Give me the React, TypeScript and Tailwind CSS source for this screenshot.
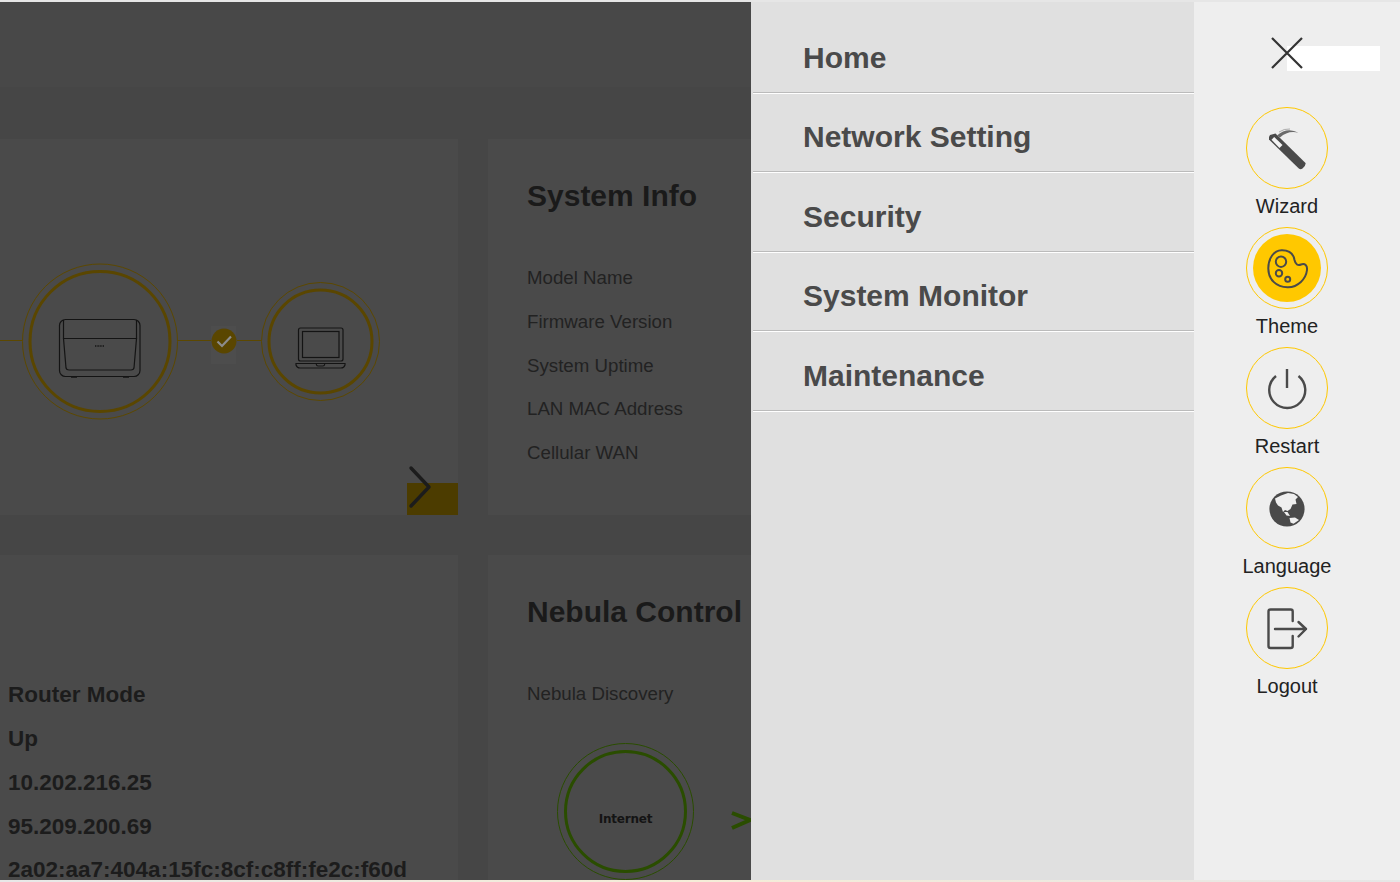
import React from 'react';

const font = "font-['Liberation_Sans',Arial,sans-serif]";

const menuItems = ['Home', 'Network Setting', 'Security', 'System Monitor', 'Maintenance'];

const WizardIcon = () => (
  <svg viewBox="0 0 82 82" className="h-full w-full" fill="none">
    <path d="M23 30 L24 28 L29.5 26.5 L59.5 56 Q60.2 58 56.5 61.5 Q54.5 63 52.8 61.5 L23 32.5 Z" fill="#4a4a4a" />
    <path d="M28.2 30 L36.5 38 L33.5 41 L25.5 32.8 Z" fill="#f4f4f4" />
    <path d="M31 28.5 Q41 19.5 52.6 25.7 Q42 23 34 30.5 Z" fill="#6a6a6a" />
    <path d="M33 25 Q38 21.5 44 22" stroke="#9a9a9a" strokeWidth="0.8" />
  </svg>
);

const ThemeIcon = () => (
  <svg viewBox="0 0 82 82" className="h-full w-full" fill="none">
    <circle cx="41" cy="41" r="34" fill="#ffc800" />
    <path
      d="M35.5 23.2 C43 23 47.5 27 48.5 33 C49.5 37.5 52 39 55 37.5 C59 36 61.5 38.5 61 43 C60 52 52 60 42 60.3 C30 60.5 22.3 52 22.3 41.5 C22.3 31 28 23.4 35.5 23.2 Z"
      stroke="#4a4a4a"
      strokeWidth="2"
    />
    <circle cx="35" cy="34.7" r="5.2" stroke="#4a4a4a" strokeWidth="2" />
    <circle cx="33" cy="46.3" r="3.2" stroke="#4a4a4a" strokeWidth="2" />
    <circle cx="41.7" cy="52.2" r="2.5" stroke="#4a4a4a" strokeWidth="2" />
  </svg>
);

const RestartIcon = () => (
  <svg viewBox="0 0 82 82" className="h-full w-full" fill="none" stroke="#4a4a4a" strokeWidth="2.4">
    <path d="M30 29 A18 18 0 1 0 52.5 29" />
    <path d="M41 22 V41" />
  </svg>
);

const LanguageIcon = () => (
  <svg viewBox="0 0 82 82" className="h-full w-full" fill="none">
    <circle cx="41" cy="42" r="17.6" fill="#4a4a4a" />
    <path
      d="M29 31.5 L35 28.5 L42 26 L48 27 L52 30 L49.5 32.5 L50.5 37 L46.5 37.5 L44.5 42 L41.5 44 L39 43 L37 45 L35.5 40.5 L32 38.5 L30 35.5 Z"
      fill="#efefef"
    />
    <path d="M38 45 L41.5 45 L44 49 L40.5 48.5 Z" fill="#efefef" />
    <path d="M43.5 51 L49 50.5 L53 53 L47.5 56.8 L44.5 55.5 Z" fill="#efefef" />
  </svg>
);

const LogoutIcon = () => (
  <svg
    viewBox="0 0 82 82"
    className="h-full w-full"
    fill="none"
    stroke="#4a4a4a"
    strokeWidth="2.4"
    strokeLinecap="round"
    strokeLinejoin="round"
  >
    <path d="M46.7 34 V24.5 Q46.7 22.5 44.7 22.5 H24.5 Q22.5 22.5 22.5 24.5 V59 Q22.5 61 24.5 61 H44.7 Q46.7 61 46.7 59 V49" />
    <path d="M29 42 H60 M52.5 35 L60 42 L52.5 49.5" />
  </svg>
);

const railItems = [
  { label: 'Wizard', icon: <WizardIcon /> },
  { label: 'Theme', icon: <ThemeIcon /> },
  { label: 'Restart', icon: <RestartIcon /> },
  { label: 'Language', icon: <LanguageIcon /> },
  { label: 'Logout', icon: <LogoutIcon /> },
];

const ConnectionDiagram = () => (
  <svg width="458" height="170" viewBox="0 255 458 170" fill="none" className="block">
    <path d="M0 340.5 H22 M178 340.5 H211 M237 340.5 H261" stroke="#5c4800" strokeWidth="1" />
    <circle cx="100" cy="341.5" r="77.5" stroke="#5c4800" strokeWidth="1" />
    <circle cx="100" cy="341.5" r="70" stroke="#5a4600" strokeWidth="3" />
    <rect x="211" y="326" width="25" height="38" fill="#4d4d4d" />
    <circle cx="224" cy="341" r="12.5" fill="#5a4600" />
    <path d="M217.5 341.5 L222 346 L231 336.5" stroke="#8c8c8c" strokeWidth="2.2" />
    <circle cx="320.5" cy="341.5" r="59" stroke="#5c4800" strokeWidth="1" />
    <circle cx="320.5" cy="341.5" r="51.5" stroke="#5a4600" strokeWidth="3" />
    {/* router */}
    <g stroke="#141414" strokeWidth="1.2">
      <rect x="59.5" y="319.5" width="80.5" height="57" rx="6" />
      <path d="M63.5 320 V338.5 H136.5 V320" />
      <path d="M63.5 338.5 L66 368 Q66.5 370 69 370 H131 Q133.5 370 134 368 L136.5 338.5" />
      <path d="M71 377 H77 M123 377 H129" strokeWidth="1.5" />
      <path d="M95 346 H104" strokeWidth="1.5" strokeDasharray="1 0.6" />
    </g>
    {/* laptop */}
    <g stroke="#141414" strokeWidth="1.2">
      <rect x="298.5" y="328" width="44.5" height="33" rx="2" />
      <rect x="302.5" y="331.5" width="36.5" height="26" />
      <path d="M296 363.5 H345 V365 Q344 368 341 368 H300 Q297 368 296 365 Z" />
      <path d="M316 363.5 Q316.5 366 318 366 H323 Q324.5 366 325 363.5" />
    </g>
  </svg>
);

const App = () => {
  return (
    <div className={`${font} relative flex h-[882px] w-[1400px] flex-col overflow-hidden bg-[#e6e6e6]`}>
      <div className="mt-[2px] flex h-[878px] w-full">
        {/* dimmed page behind the menu */}
        <div className="h-full w-[751px] shrink-0 overflow-hidden bg-[#464646]">
          <div className="h-[85px] bg-[#484848]" />
          <div className="mt-[52px] grid grid-cols-[458px_263px] grid-rows-[376px_325px] gap-x-[30px] gap-y-[40px]">
            <div className="relative bg-[#4a4a4a] pt-[116px]">
              <ConnectionDiagram />
              <div className="absolute bottom-0 right-0 h-[32px] w-[51px] bg-[#4c3c00]" />
              <svg width="26" height="44" viewBox="0 0 26 44" fill="none" className="absolute left-[408px] top-[326px]">
                <path d="M3 3 L21 22 L3 41" stroke="#1c1c1c" strokeWidth="3.4" strokeLinecap="round" strokeLinejoin="round" />
              </svg>
            </div>
            <div className="bg-[#4a4a4a] pl-[39px] pt-[39px]">
              <h2 className="mb-[42px] whitespace-nowrap text-[30px] font-bold leading-[36px] text-[#1a1a1a]">System Info</h2>
              {['Model Name', 'Firmware Version', 'System Uptime', 'LAN MAC Address', 'Cellular WAN'].map((row) => (
                <div key={row} className="h-[43.75px] whitespace-nowrap text-[18.7px] leading-[44px] text-[#222222]">
                  {row}
                </div>
              ))}
            </div>
            <div className="bg-[#4a4a4a] pl-[8px] pt-[118.4px]">
              {['Router Mode', 'Up', '10.202.216.25', '95.209.200.69', '2a02:aa7:404a:15fc:8cf:c8ff:fe2c:f60d'].map((row) => (
                <div key={row} className="h-[43.75px] whitespace-nowrap text-[22.5px] font-bold leading-[44px] text-[#1c1c1c]">
                  {row}
                </div>
              ))}
            </div>
            <div className="relative bg-[#4a4a4a] pl-[39px] pt-[39px]">
              <h2 className="mb-[42px] whitespace-nowrap text-[30px] font-bold leading-[36px] text-[#1a1a1a]">Nebula Control</h2>
              <div className="h-[44px] whitespace-nowrap text-[18.7px] leading-[44px] text-[#222222]">Nebula Discovery</div>
              <div className="ml-[30px] mt-[27px] flex h-[137px] w-[137px] items-center justify-center rounded-full border border-[#2a4d00]">
                <div className="flex h-[123px] w-[123px] items-center justify-center rounded-full border-[3px] border-[#2a4d00]">
                  <span className="mt-[14px] font-['DejaVu_Sans',sans-serif] text-[12px] font-bold tracking-[-0.2px] text-[#141414]">Internet</span>
                </div>
              </div>
              <svg width="20" height="20" viewBox="0 0 20 20" fill="none" className="absolute left-[243px] top-[256px]">
                <path d="M1 2 L19 9 L1 17" stroke="#2a4d00" strokeWidth="4" />
              </svg>
            </div>
          </div>
        </div>

        {/* main menu */}
        <nav className="h-full w-[443px] shrink-0 bg-[#e0e0e0] pl-[2px] pt-[11px]">
          {menuItems.map((item) => (
            <div
              key={item}
              className="flex h-[79.5px] items-center border-b border-[#bbbbbb] pl-[50px] pt-[10px] text-[30px] font-bold text-[#4a4a4a] shadow-[0_1px_0_#ffffff]"
            >
              {item}
            </div>
          ))}
        </nav>

        {/* quick actions */}
        <aside className="relative flex h-full flex-1 flex-col items-center bg-[#eeeeee] pr-[20px] pt-[35px]">
          <div className="absolute left-[93px] top-[44px] h-[25px] w-[93px] bg-white" />
          <svg width="32" height="32" viewBox="0 0 32 32" fill="none" className="relative mb-[38px]">
            <path d="M1 1 L31 31 M31 1 L1 31" stroke="#333333" strokeWidth="2.2" />
          </svg>
          <div className="flex flex-col items-center gap-[10px]">
            {railItems.map((item) => (
              <div key={item.label} className="flex flex-col items-center">
                <div className="h-[82px] w-[82px] rounded-full border border-[#ffc800]">
                  <div className="-m-px h-[82px] w-[82px]">{item.icon}</div>
                </div>
                <span className="mt-[6px] text-[20px] leading-[22px] text-[#222222]">{item.label}</span>
              </div>
            ))}
          </div>
        </aside>
      </div>
      <div className="h-[2px] w-full bg-gradient-to-r from-[#e8e8e8] via-[#f5edd8] to-[#e6e6e6]" />
    </div>
  );
};

export default App;
